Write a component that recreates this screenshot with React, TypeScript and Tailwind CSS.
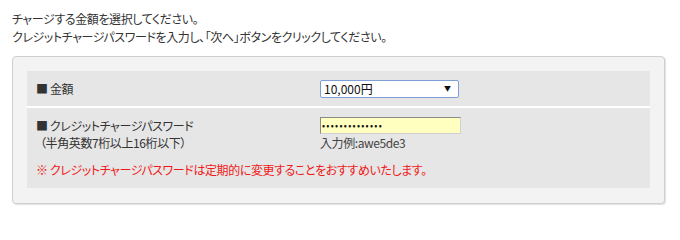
const font = "font-['Noto_Sans_CJK_JP','Noto_Sans',sans-serif] [font-feature-settings:'palt']";

export default function App() {
  return (
    <div className={`w-[680px] h-[213px] bg-white pt-[10px] text-[12px] tracking-[-0.4px] text-[#333] ${font}`}>
      {/* intro */}
      <div className="pl-[12px] leading-[18px]">
        <p>チャージする金額を選択してください。</p>
        <p>クレジットチャージパスワードを入力し、「次へ」ボタンをクリックしてください。</p>
      </div>

      <div className="ml-[12px] mt-[10px] w-[653px] rounded-[4px] border border-[#cfcfcf] bg-[#f3f3f3] px-[14px] pt-[14px] pb-[15px] shadow-[1px_1px_1px_rgba(0,0,0,0.12)]">
        {/* amount */}
        <div className="flex h-[35px] items-center bg-[#e6e6e6] pl-[9px]">
          <div className="w-[284px] leading-[17px]">■ 金額</div>
          <div className="flex h-[18px] w-[139px] items-center justify-between rounded-[2px] border border-[#7d9fd6] bg-white pl-[3px] pr-[7px] leading-none tracking-normal text-[#111]">
            <span>10,000円</span>
            <span className="text-[7px]">▼</span>
          </div>
        </div>

        <div className="h-[2px] bg-white" />

        {/* password */}
        <div className="bg-[#e6e6e6] pl-[9px] pt-[9px] pb-[10px]">
          <div className="flex">
            <div className="w-[284px] leading-[17px]">
              <p>■ クレジットチャージパスワード</p>
              <p className="pl-[4px]">（半角英数7桁以上16桁以下）</p>
            </div>
            <div>
              <div className="flex h-[17px] w-[141px] items-center border border-[#d0d0d0] border-t-[#8a8a8a] border-l-[#8a8a8a] bg-[#ffffc0] pl-[1px] text-[9px] leading-none tracking-[1.3px] text-[#111]">
                ••••••••••••••
              </div>
              <p className="leading-[17px] text-[#444]">入力例:awe5de3</p>
            </div>
          </div>
          <p className="mt-[10px] leading-[17px] text-[#f01818]">
            ※ クレジットチャージパスワードは定期的に変更することをおすすめいたします。
          </p>
        </div>
      </div>
    </div>
  );
}
